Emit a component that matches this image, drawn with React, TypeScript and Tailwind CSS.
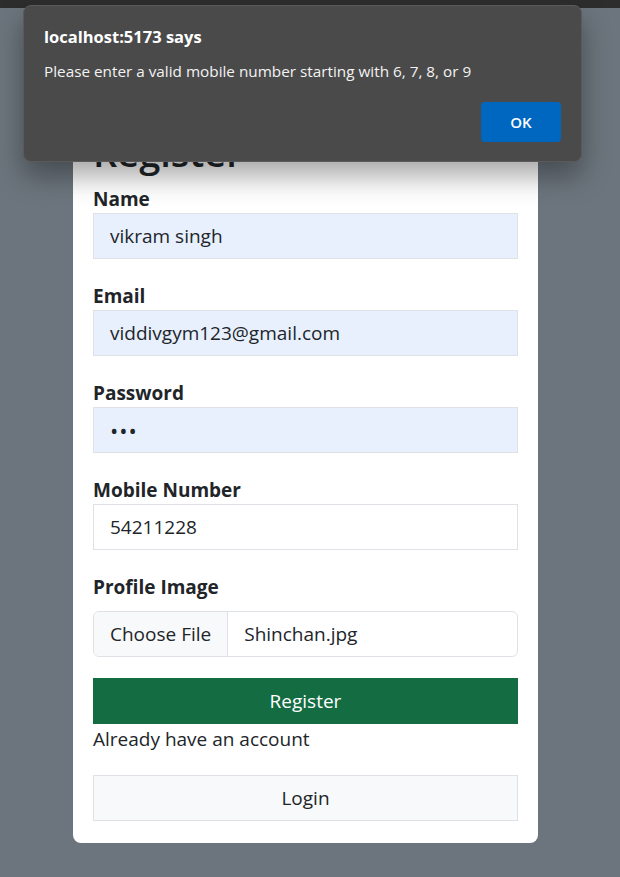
import React from "react";

const font = { fontFamily: '"Open Sans", "Noto Sans", sans-serif' };

function Field({ label, value, filled, type }: { label: string; value: string; filled?: boolean; type?: string }) {
  return (
    <div className="mb-6">
      <label className="block text-[19px] font-bold leading-[27px] text-[#212529]">{label}</label>
      <div
        className={`flex h-[46px] items-center border border-[#dee2e6] px-4 text-[19px] text-[#212529] ${
          filled ? "bg-[#e8f0fe]" : "bg-white"
        }`}
      >
        {type === "password" ? <span className="text-[22px] leading-none tracking-[1px]">•••</span> : value}
      </div>
    </div>
  );
}

export default function App() {
  return (
    <div className="relative min-h-[877px] bg-[#6c757d]" style={font}>
      <div className="h-[8px] bg-[#2d2d2d]" />

      <div className="ml-[73px] mt-[103px] w-[465px] rounded-lg bg-white px-5 pb-[22px] pt-5">
        <h1 className="mb-[13px] text-[38px] font-semibold leading-[42px] text-[#212529]">Register</h1>
        <Field label="Name" value="vikram singh" filled />
        <Field label="Email" value="viddivgym123@gmail.com" filled />
        <Field label="Password" value="" filled type="password" />
        <Field label="Mobile Number" value="54211228" />

        <div>
          <label className="block text-[19px] font-bold leading-[27px] text-[#212529]">Profile Image</label>
          <div className="mt-[10px] flex h-[46px] overflow-hidden rounded-md border border-[#dee2e6] text-[19px] text-[#212529]">
            <div className="flex items-center border-r border-[#dee2e6] bg-[#f8f9fa] px-4">Choose File</div>
            <div className="flex items-center px-4">Shinchan.jpg</div>
          </div>
        </div>

        <button className="mt-[21px] flex h-[46px] w-full items-center justify-center bg-[#146c43] text-[19px] text-white">
          Register
        </button>
        <p className="text-[19px] leading-[31px] text-[#212529]">Already have an account</p>
        <button className="mt-5 flex h-[46px] w-full items-center justify-center border border-[#dee2e6] bg-[#f8f9fa] text-[19px] text-[#212529]">
          Login
        </button>
      </div>

      {/* browser alert */}
      <div className="absolute left-[23px] top-[5px] h-[157px] w-[559px] rounded-lg border border-[#5a5a5a] bg-[#4a4a4a] px-5 pt-[18px] shadow-[0_14px_28px_rgba(0,0,0,0.35)]">
        <div className="text-[16.5px] font-bold leading-[26px] text-white">localhost:5173 says</div>
        <div className="mt-[10px] text-[15.3px] leading-[22px] text-[#f3f3f3]">
          Please enter a valid mobile number starting with 6, 7, 8, or 9
        </div>
        <div className="mt-[20px] flex justify-end">
          <button className="h-[40px] w-[80px] rounded bg-[#0067c0] text-[15px] font-semibold text-white">OK</button>
        </div>
      </div>
    </div>
  );
}
